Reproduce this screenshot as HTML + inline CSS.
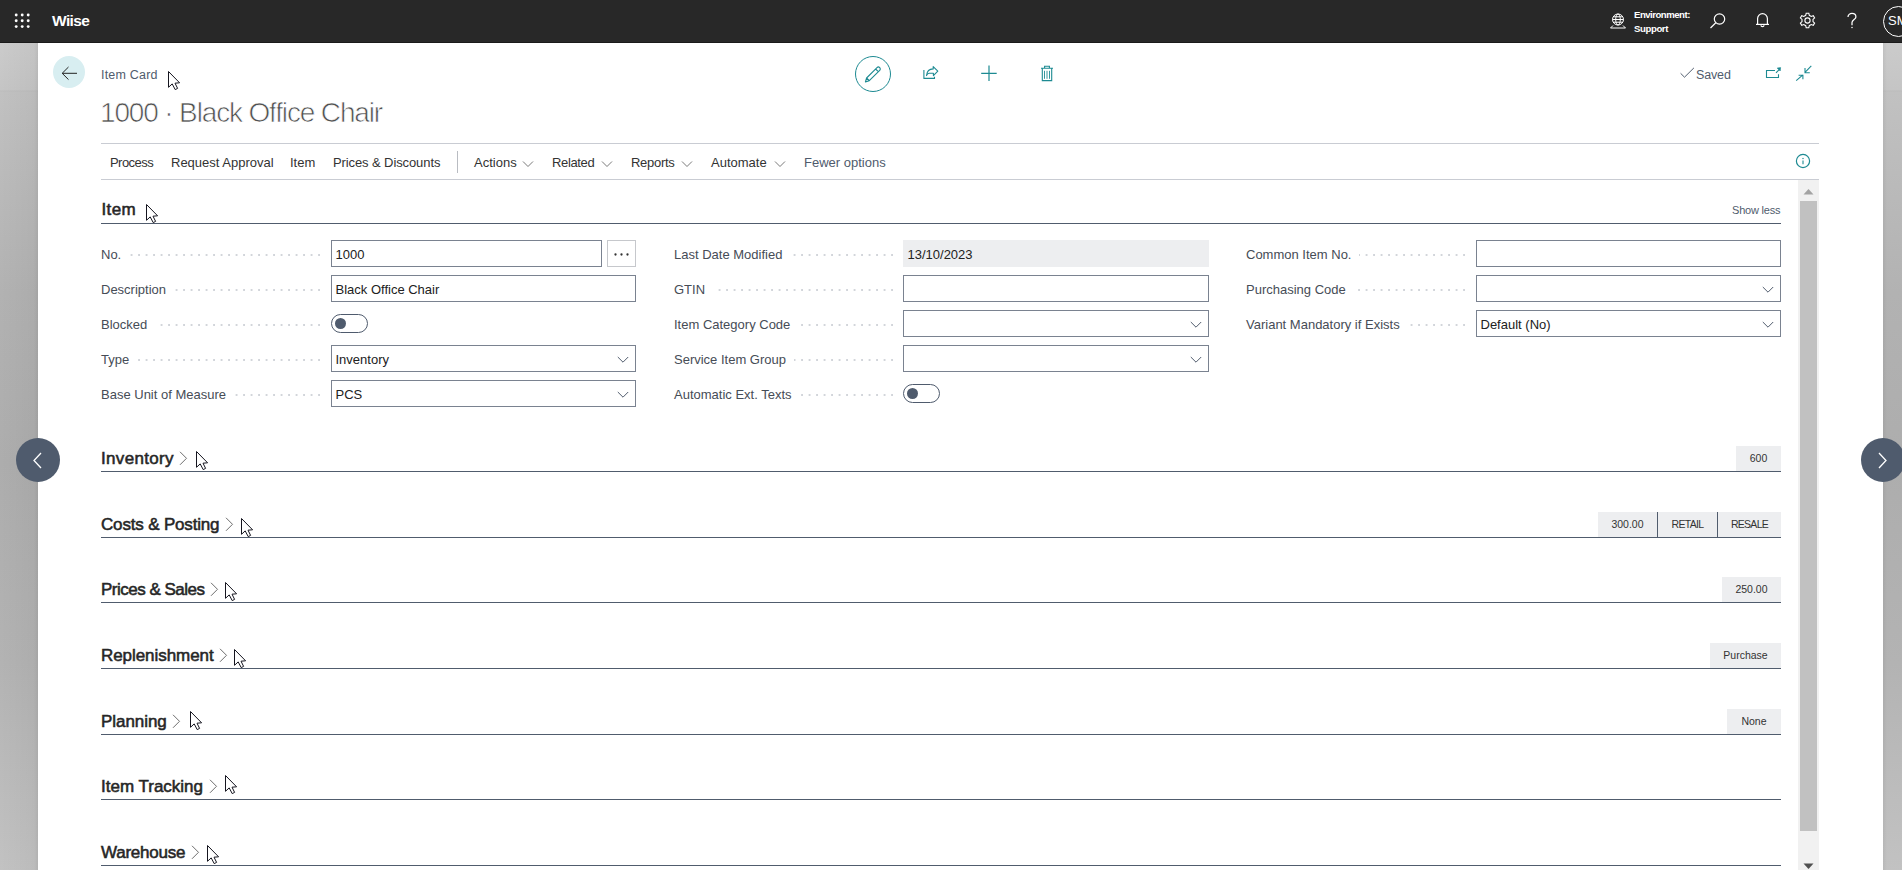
<!DOCTYPE html>
<html><head><meta charset="utf-8">
<style>
*{box-sizing:border-box;margin:0;padding:0}
html,body{width:1902px;height:870px;overflow:hidden;background:#fff;font-family:"Liberation Sans",sans-serif;color:#333}
.abs{position:absolute}
#top{position:absolute;left:0;top:0;width:1902px;height:43px;background:#282828;border-bottom:1px solid #1a1a1a;color:#fff;z-index:5}
#lstrip{position:absolute;left:0;top:43px;width:38px;height:827px;background:linear-gradient(90deg,rgba(0,0,0,0) 0,rgba(0,0,0,0.03) 34px,rgba(0,0,0,0.08) 38px),linear-gradient(180deg,#cbcbcb 0,#c5c5c5 47px,#bcbcbc 48px,#c1c1c1 49px,#b2b2b2 250px,#adadad 420px,#b3b3b3 620px,#c2c2c2 828px)}
#rstrip{position:absolute;left:1883px;top:43px;width:19px;height:827px;background:linear-gradient(90deg,rgba(0,0,0,0.05) 0,rgba(0,0,0,0) 4px),linear-gradient(180deg,#cbcbcb 0,#c5c5c5 47px,#bcbcbc 48px,#c1c1c1 49px,#b2b2b2 250px,#adadad 420px,#b3b3b3 620px,#c2c2c2 828px)}
.t13{font-size:13px;white-space:nowrap;position:absolute;line-height:16px}
.lbl{position:absolute;font-size:13px;line-height:16px;color:#464c56;white-space:nowrap;background:#fff;padding-right:8px;z-index:2}
.dots{position:absolute;height:2px;background-image:linear-gradient(90deg,transparent 5.5px,#d2d5da 5.5px);background-size:7.5px 2px;background-position:right 0 top 0;background-repeat:repeat-x}
.inp{position:absolute;height:27px;border:1px solid #7a8290;background:#fff;font-size:13px;line-height:27px;padding-left:3.5px;color:#212121;white-space:nowrap}
.inp.ro{background:#edeef0;border-color:#edeef0}
.chev{position:absolute;right:6px;top:9.5px;width:12px;height:8px}
.tog{position:absolute;width:37px;height:19px;border:1px solid #4f5b6d;border-radius:10px;background:#fff}
.tog:after{content:"";position:absolute;left:2.5px;top:3px;width:11px;height:11px;border-radius:50%;background:#4f5b6d}
.sech{position:absolute;left:101px;font-size:17px;font-weight:400;color:#262626;-webkit-text-stroke:0.55px #262626;white-space:nowrap;line-height:20px}
.secl{position:absolute;left:101px;width:1680px;height:2px;background:#505c6d;transform:scaleY(0.75)}
.badge{position:absolute;height:22px;background:#edeef0;font-size:10.5px;line-height:22px;color:#333;text-align:center;white-space:nowrap}
.schev{display:inline-block;margin-left:4px;vertical-align:-1px}
.cur{position:absolute;z-index:10}
.act{position:absolute;top:155px;font-size:13px;line-height:16px;color:#333;white-space:nowrap}
</style></head><body>

<!-- top bar -->
<div id="top">
  <svg class="abs" style="left:14px;top:12.5px" width="17" height="16" viewBox="0 0 17 16"><g fill="#fff"><circle cx="2.2" cy="2" r="1.45"/><circle cx="8.2" cy="2" r="1.45"/><circle cx="14.2" cy="2" r="1.45"/><circle cx="2.2" cy="7.8" r="1.45"/><circle cx="8.2" cy="7.8" r="1.45"/><circle cx="14.2" cy="7.8" r="1.45"/><circle cx="2.2" cy="13.6" r="1.45"/><circle cx="8.2" cy="13.6" r="1.45"/><circle cx="14.2" cy="13.6" r="1.45"/></g></svg>
  <div class="abs" style="left:52px;top:11px;font-size:15.5px;font-weight:700;line-height:20px;letter-spacing:-0.6px">Wiise</div>
  <!-- globe -->
  <svg class="abs" style="left:1609px;top:13px" width="18" height="16" viewBox="0 0 18 16" fill="none" stroke="#fff" stroke-width="1">
    <circle cx="9" cy="6.5" r="5.5"/><ellipse cx="9" cy="6.5" rx="2.3" ry="5.5"/><line x1="3.5" y1="6.5" x2="14.5" y2="6.5"/><line x1="4.2" y1="3.8" x2="13.8" y2="3.8"/><line x1="4.2" y1="9.2" x2="13.8" y2="9.2"/>
    <path d="M4 12.5 L1.5 15 H16.5 L14 12.5"/>
  </svg>
  <div class="abs" style="left:1634px;top:7.5px;font-size:9.6px;font-weight:700;line-height:14px;letter-spacing:-0.5px">Environment:</div>
  <div class="abs" style="left:1634px;top:22px;font-size:9.6px;font-weight:700;line-height:14px;letter-spacing:-0.4px">Support</div>
  <!-- search -->
  <svg class="abs" style="left:1709px;top:12px" width="18" height="18" viewBox="0 0 18 18" fill="none" stroke="#fff" stroke-width="1.2">
    <circle cx="10.5" cy="7" r="5.2"/><line x1="6.8" y1="10.8" x2="1.5" y2="16"/>
  </svg>
  <!-- bell -->
  <svg class="abs" style="left:1750px;top:10px" width="24" height="22" viewBox="1750 10 24 22" fill="none" stroke="#fff" stroke-width="1.2"><path d="M1757.6 24 V18.6 A4.9 4.9 0 0 1 1767.4 18.6 V24"/><path d="M1756 24.4 H1769"/><path d="M1761 25.2 A1.5 1.5 0 0 0 1764 25.2"/></svg>
  <!-- gear -->
  <svg class="abs" style="left:1799px;top:12px" width="17" height="17" viewBox="0 0 17 17" fill="none" stroke="#fff" stroke-width="1.1">
    <path d="M7.2 1.2 H9.8 L10.3 3.3 L12.2 4.4 L14.3 3.7 L15.6 6 L14 7.4 V9.6 L15.6 11 L14.3 13.3 L12.2 12.6 L10.3 13.7 L9.8 15.8 H7.2 L6.7 13.7 L4.8 12.6 L2.7 13.3 L1.4 11 L3 9.6 V7.4 L1.4 6 L2.7 3.7 L4.8 4.4 L6.7 3.3 Z"/>
    <circle cx="8.5" cy="8.5" r="2.6"/>
  </svg>
  <!-- help -->
  <svg class="abs" style="left:1840px;top:8px" width="24" height="26" viewBox="1840 8 24 26" fill="none" stroke="#fff" stroke-width="1.25"><path d="M1848 16.9 C1848 14.8 1849.8 13.4 1852 13.4 C1854.2 13.4 1855.9 14.9 1855.9 16.9 C1855.9 19.2 1852 19.9 1852 22.6 V25.2"/><circle cx="1852" cy="27.6" r="0.75" fill="#fff" stroke="none"/></svg>
  <!-- avatar -->
  <div class="abs" style="left:1883px;top:6px;width:31px;height:31px;border:1px solid #fff;border-radius:50%"></div>
  <div class="abs" style="left:1888px;top:13px;font-size:13px;line-height:16px;color:#fff">SM</div>
</div>

<div id="lstrip"></div>
<div id="rstrip"></div>

<!-- left/right nav circles -->
<div class="abs" style="left:15.5px;top:438px;width:44px;height:44px;border-radius:50%;background:#4f5b6d"></div>
<svg class="abs" style="left:32px;top:452px" width="12" height="17" viewBox="0 0 12 17" fill="none" stroke="#fff" stroke-width="1.3"><path d="M9 1 L2 8.5 L9 16"/></svg>
<div class="abs" style="left:1861px;top:438px;width:44px;height:44px;border-radius:50%;background:#4f5b6d"></div>
<svg class="abs" style="left:1876px;top:452px" width="12" height="17" viewBox="0 0 12 17" fill="none" stroke="#fff" stroke-width="1.3"><path d="M3 1 L10 8.5 L3 16"/></svg>

<!-- header -->
<div class="abs" style="left:53px;top:56px;width:32px;height:32px;border-radius:50%;background:#d8eef1"></div>
<svg class="abs" style="left:61px;top:65.5px" width="17" height="15" viewBox="0 0 17 15" fill="none" stroke="#222" stroke-width="1"><path d="M7.5 1 L1.2 7.3 L7.5 13.6 M1.2 7.3 H16"/></svg>
<div class="abs" style="left:101px;top:67px;font-size:12.5px;line-height:16px;color:#505c6d;white-space:nowrap;letter-spacing:0.2px">Item Card</div>
<div class="abs" style="left:100px;top:97px;font-size:28px;line-height:32px;color:#505050;white-space:nowrap;letter-spacing:-1.15px;-webkit-text-stroke:0.7px #fff">1000 · Black Office Chair</div>

<!-- center actions -->
<div class="abs" style="left:855px;top:56px;width:36px;height:36px;border-radius:50%;border:1.4px solid #1d8a92"></div>
<svg class="abs" style="left:863.3px;top:64.5px" width="20" height="20" viewBox="0 0 20 20" fill="none" stroke="#1d8a92" stroke-width="1.1" stroke-linejoin="round"><path d="M2.4 16.9 L3.6 13.0 L14.0 2.6 A1.55 1.55 0 0 1 16.7 5.3 L6.3 15.7 Z M12.6 4.0 L15.3 6.7 M3.6 13.0 L6.3 15.7"/></svg>
<svg class="abs" style="left:918px;top:60px" width="25" height="25" viewBox="0 0 25 25" fill="none" stroke="#1d8a92" stroke-width="1.1" stroke-linejoin="round"><path d="M5.9 10 V18.4 H16.5 V16.8"/><path d="M8.5 15.6 C8.9 11.6 11.2 8.9 15.2 8.9 V6.6 L19.8 11.2 L15.4 15.6 V13.2 H11.2 C10 13.2 9.1 14.2 8.5 15.6 Z"/></svg>
<svg class="abs" style="left:980px;top:65px" width="18" height="17" viewBox="0 0 18 17" fill="none" stroke="#1d8a92" stroke-width="1.2"><path d="M9 0.5 V16 M1.2 8.3 H16.7"/></svg>
<svg class="abs" style="left:1040px;top:65px" width="14" height="17" viewBox="0 0 14 17" fill="none" stroke="#1d8a92" stroke-width="1.1"><path d="M1 3.3 H13 M4.6 3.2 V1.2 H9.4 V3.2 M2.3 3.3 V15.6 H11.7 V3.3"/><path d="M4.5 5.8 V13.8 M7 5.8 V13.8 M9.5 5.8 V13.8" stroke-width="0.9"/></svg>

<!-- saved -->
<svg class="abs" style="left:1680px;top:67px" width="15" height="11" viewBox="0 0 15 11" fill="none" stroke="#505c6d" stroke-width="1"><path d="M0.6 6.3 L4.5 10.2 L13.9 0.9"/></svg>
<div class="abs" style="left:1696px;top:67px;font-size:12.5px;line-height:16px;color:#505c6d;white-space:nowrap;letter-spacing:-0.15px">Saved</div>
<svg class="abs" style="left:1765px;top:66px" width="17" height="14" viewBox="0 0 17 14" fill="none" stroke="#1d8a92" stroke-width="1.1"><path d="M10 4.5 H1.5 V11.5 H13.5 V8.2"/><path d="M11 6.8 L14.6 3.2"/><path d="M12.2 2.0 L15.6 1.6 L15.2 5.0 Z" fill="#1d8a92" stroke-width="0.6"/></svg>
<svg class="abs" style="left:1795px;top:65px" width="17" height="17" viewBox="0 0 17 17" fill="none" stroke="#1d8a92" stroke-width="1.1"><path d="M1.2 15.6 L7.9 9.8 M3.6 10.2 H7.9 V14.2"/><path d="M16.3 0.9 L10 7.3 M10 3.0 V7.7 H14.8"/></svg>

<!-- action bar -->
<div class="abs" style="left:101px;top:143px;width:1718px;height:1px;background:#c9ccd3"></div>
<div class="abs" style="left:101px;top:179px;width:1718px;height:1px;background:#c9ccd3"></div>
<div class="act" style="left:110px;letter-spacing:-0.55px">Process</div>
<div class="act" style="left:171px">Request Approval</div>
<div class="act" style="left:290px">Item</div>
<div class="act" style="left:333px;letter-spacing:-0.1px">Prices &amp; Discounts</div>
<div class="abs" style="left:457px;top:151px;width:1px;height:22px;background:#b9bcc2"></div>
<div class="act" style="left:474px">Actions</div>
<div class="act" style="left:552px;letter-spacing:-0.35px">Related</div>
<div class="act" style="left:631px;letter-spacing:-0.3px">Reports</div>
<div class="act" style="left:711px">Automate</div>
<div class="act" style="left:804px;color:#4f5b6d">Fewer options</div>
<svg class="abs" style="left:522px;top:160px" width="12" height="8" viewBox="0 0 12 8" fill="none" stroke="#6a6a6a" stroke-width="0.9"><path d="M1 1.5 L6 6.5 L11 1.5"/></svg>
<svg class="abs" style="left:601px;top:160px" width="12" height="8" viewBox="0 0 12 8" fill="none" stroke="#6a6a6a" stroke-width="0.9"><path d="M1 1.5 L6 6.5 L11 1.5"/></svg>
<svg class="abs" style="left:681px;top:160px" width="12" height="8" viewBox="0 0 12 8" fill="none" stroke="#6a6a6a" stroke-width="0.9"><path d="M1 1.5 L6 6.5 L11 1.5"/></svg>
<svg class="abs" style="left:774px;top:160px" width="12" height="8" viewBox="0 0 12 8" fill="none" stroke="#6a6a6a" stroke-width="0.9"><path d="M1 1.5 L6 6.5 L11 1.5"/></svg>
<svg class="abs" style="left:1795.3px;top:153px" width="16" height="16" viewBox="0 0 16 16" fill="none" stroke="#1d8a92" stroke-width="1.2"><circle cx="8" cy="8" r="6.6"/><path d="M8 7.4 V11.3" stroke-width="1.1"/><circle cx="8" cy="5.6" r="0.45" fill="#1d8a92" stroke-width="0.6"/></svg>

<!-- scrollbar -->
<div class="abs" style="left:1798px;top:180px;width:21px;height:690px;background:#f1f1f1"></div>
<div class="abs" style="left:1800px;top:201px;width:17px;height:630px;background:#c1c1c1"></div>
<svg class="abs" style="left:1803px;top:188px" width="11" height="7" viewBox="0 0 11 7"><path d="M0.5 6.5 L5.5 1 L10.5 6.5 Z" fill="#a3a3a3"/></svg>
<svg class="abs" style="left:1803px;top:862.5px" width="11" height="7" viewBox="0 0 11 7"><path d="M0.5 0.5 L5.5 6 L10.5 0.5 Z" fill="#505050"/></svg>

<!-- CONTENT -->
<!--CONTENT-->
<div class="sech" style="top:199.5px;left:101.5px;letter-spacing:0.4px">Item</div>
<div class="abs" style="left:101px;top:223px;width:1680px;height:1px;background:#505c6d"></div>
<div class="abs" style="left:1732px;top:203px;font-size:11px;line-height:14px;color:#505c6d;white-space:nowrap;letter-spacing:-0.2px">Show less</div>
<div class="lbl" style="left:101px;top:247px">No.</div>
<div class="dots" style="left:101px;top:254px;width:219px"></div>
<div class="inp" style="left:331px;top:240px;width:271px">1000</div>
<div class="inp" style="left:607px;top:240px;width:29px;border-color:#c6c8cc"></div>
<svg class="abs" style="left:614px;top:252.5px" width="15" height="3" viewBox="0 0 15 3"><g fill="#333"><circle cx="1.5" cy="1.5" r="1.15"/><circle cx="7.5" cy="1.5" r="1.15"/><circle cx="13.5" cy="1.5" r="1.15"/></g></svg>
<div class="lbl" style="left:101px;top:282px">Description</div>
<div class="dots" style="left:101px;top:289px;width:219px"></div>
<div class="inp" style="left:331px;top:275px;width:305px">Black Office Chair</div>
<div class="lbl" style="left:101px;top:317px">Blocked</div>
<div class="dots" style="left:101px;top:324px;width:219px"></div>
<div class="tog" style="left:331px;top:314px"></div>
<div class="lbl" style="left:101px;top:352px">Type</div>
<div class="dots" style="left:101px;top:359px;width:219px"></div>
<div class="inp" style="left:331px;top:345px;width:305px">Inventory<svg class="chev" width="12" height="8" viewBox="0 0 12 8" fill="none" stroke="#505c6d" stroke-width="1"><path d="M0.8 1 L6 6.2 L11.2 1"/></svg></div>
<div class="lbl" style="left:101px;top:387px">Base Unit of Measure</div>
<div class="dots" style="left:101px;top:394px;width:219px"></div>
<div class="inp" style="left:331px;top:380px;width:305px">PCS<svg class="chev" width="12" height="8" viewBox="0 0 12 8" fill="none" stroke="#505c6d" stroke-width="1"><path d="M0.8 1 L6 6.2 L11.2 1"/></svg></div>
<div class="lbl" style="left:674px;top:247px">Last Date Modified</div>
<div class="dots" style="left:674px;top:254px;width:219px"></div>
<div class="inp ro" style="left:903px;top:240px;width:306px">13/10/2023</div>
<div class="lbl" style="left:674px;top:282px">GTIN</div>
<div class="dots" style="left:674px;top:289px;width:219px"></div>
<div class="inp" style="left:903px;top:275px;width:306px"></div>
<div class="lbl" style="left:674px;top:317px">Item Category Code</div>
<div class="dots" style="left:674px;top:324px;width:219px"></div>
<div class="inp" style="left:903px;top:310px;width:306px"><svg class="chev" width="12" height="8" viewBox="0 0 12 8" fill="none" stroke="#505c6d" stroke-width="1"><path d="M0.8 1 L6 6.2 L11.2 1"/></svg></div>
<div class="lbl" style="left:674px;top:352px">Service Item Group</div>
<div class="dots" style="left:674px;top:359px;width:219px"></div>
<div class="inp" style="left:903px;top:345px;width:306px"><svg class="chev" width="12" height="8" viewBox="0 0 12 8" fill="none" stroke="#505c6d" stroke-width="1"><path d="M0.8 1 L6 6.2 L11.2 1"/></svg></div>
<div class="lbl" style="left:674px;top:387px">Automatic Ext. Texts</div>
<div class="dots" style="left:674px;top:394px;width:219px"></div>
<div class="tog" style="left:903px;top:384px"></div>
<div class="lbl" style="left:1246px;top:247px">Common Item No.</div>
<div class="dots" style="left:1246px;top:254px;width:219px"></div>
<div class="inp" style="left:1476px;top:240px;width:305px"></div>
<div class="lbl" style="left:1246px;top:282px">Purchasing Code</div>
<div class="dots" style="left:1246px;top:289px;width:219px"></div>
<div class="inp" style="left:1476px;top:275px;width:305px"><svg class="chev" width="12" height="8" viewBox="0 0 12 8" fill="none" stroke="#505c6d" stroke-width="1"><path d="M0.8 1 L6 6.2 L11.2 1"/></svg></div>
<div class="lbl" style="left:1246px;top:317px">Variant Mandatory if Exists</div>
<div class="dots" style="left:1246px;top:324px;width:219px"></div>
<div class="inp" style="left:1476px;top:310px;width:305px">Default (No)<svg class="chev" width="12" height="8" viewBox="0 0 12 8" fill="none" stroke="#505c6d" stroke-width="1"><path d="M0.8 1 L6 6.2 L11.2 1"/></svg></div>
<div class="sech" style="top:448.5px;letter-spacing:0.33px">Inventory</div>
<svg class="abs" style="left:178.5px;top:450.5px" width="9" height="15" viewBox="0 0 9 15" fill="none" stroke="#6e6e6e" stroke-width="1"><path d="M1 0.8 L7.5 7.3 L1 13.8"/></svg>
<div class="abs" style="left:101px;top:471px;width:1680px;height:1px;background:#505c6d"></div>
<div class="badge" style="left:1736px;top:446px;width:45px;height:25px;line-height:25px;letter-spacing:0">600</div>
<svg class="cur" style="left:196.3px;top:451.0px" width="13" height="20" viewBox="0 0 13 20"><path d="M0.5 0.5 V16.3 L4.2 12.9 L7.2 18.6 L9.6 17.4 L7.0 12.2 L11.6 11.8 Z" fill="#fff" stroke="#15151f" stroke-width="1" stroke-linejoin="round"/></svg>
<div class="sech" style="top:514.5px;letter-spacing:-0.17px">Costs &amp; Posting</div>
<svg class="abs" style="left:224.5px;top:516.5px" width="9" height="15" viewBox="0 0 9 15" fill="none" stroke="#6e6e6e" stroke-width="1"><path d="M1 0.8 L7.5 7.3 L1 13.8"/></svg>
<div class="abs" style="left:101px;top:537px;width:1680px;height:1px;background:#505c6d"></div>
<div class="badge" style="left:1598px;top:512px;width:59px;height:25px;line-height:25px;letter-spacing:0">300.00</div>
<div class="badge" style="left:1658px;top:512px;width:59px;height:25px;line-height:25px;letter-spacing:-0.7px">RETAIL</div>
<div class="abs" style="left:1657px;top:512px;width:1px;height:25px;background:#505c6d"></div>
<div class="badge" style="left:1718px;top:512px;width:63px;height:25px;line-height:25px;letter-spacing:-0.7px">RESALE</div>
<div class="abs" style="left:1717px;top:512px;width:1px;height:25px;background:#505c6d"></div>
<svg class="cur" style="left:241.4px;top:518.1px" width="13" height="20" viewBox="0 0 13 20"><path d="M0.5 0.5 V16.3 L4.2 12.9 L7.2 18.6 L9.6 17.4 L7.0 12.2 L11.6 11.8 Z" fill="#fff" stroke="#15151f" stroke-width="1" stroke-linejoin="round"/></svg>
<div class="sech" style="top:579.5px;letter-spacing:-0.5px">Prices &amp; Sales</div>
<svg class="abs" style="left:209.5px;top:581.5px" width="9" height="15" viewBox="0 0 9 15" fill="none" stroke="#6e6e6e" stroke-width="1"><path d="M1 0.8 L7.5 7.3 L1 13.8"/></svg>
<div class="abs" style="left:101px;top:602px;width:1680px;height:1px;background:#505c6d"></div>
<div class="badge" style="left:1722px;top:577px;width:59px;height:25px;line-height:25px;letter-spacing:0">250.00</div>
<svg class="cur" style="left:224.5px;top:582.2px" width="13" height="20" viewBox="0 0 13 20"><path d="M0.5 0.5 V16.3 L4.2 12.9 L7.2 18.6 L9.6 17.4 L7.0 12.2 L11.6 11.8 Z" fill="#fff" stroke="#15151f" stroke-width="1" stroke-linejoin="round"/></svg>
<div class="sech" style="top:645.5px;letter-spacing:-0.06px">Replenishment</div>
<svg class="abs" style="left:218.5px;top:647.5px" width="9" height="15" viewBox="0 0 9 15" fill="none" stroke="#6e6e6e" stroke-width="1"><path d="M1 0.8 L7.5 7.3 L1 13.8"/></svg>
<div class="abs" style="left:101px;top:668px;width:1680px;height:1px;background:#505c6d"></div>
<div class="badge" style="left:1710px;top:643px;width:71px;height:25px;line-height:25px;letter-spacing:0">Purchase</div>
<svg class="cur" style="left:234.3px;top:649.3px" width="13" height="20" viewBox="0 0 13 20"><path d="M0.5 0.5 V16.3 L4.2 12.9 L7.2 18.6 L9.6 17.4 L7.0 12.2 L11.6 11.8 Z" fill="#fff" stroke="#15151f" stroke-width="1" stroke-linejoin="round"/></svg>
<div class="sech" style="top:711.5px;letter-spacing:-0.06px">Planning</div>
<svg class="abs" style="left:171.9px;top:713.5px" width="9" height="15" viewBox="0 0 9 15" fill="none" stroke="#6e6e6e" stroke-width="1"><path d="M1 0.8 L7.5 7.3 L1 13.8"/></svg>
<div class="abs" style="left:101px;top:734px;width:1680px;height:1px;background:#505c6d"></div>
<div class="badge" style="left:1727px;top:709px;width:54px;height:25px;line-height:25px;letter-spacing:0">None</div>
<svg class="cur" style="left:190.3px;top:711.3px" width="13" height="20" viewBox="0 0 13 20"><path d="M0.5 0.5 V16.3 L4.2 12.9 L7.2 18.6 L9.6 17.4 L7.0 12.2 L11.6 11.8 Z" fill="#fff" stroke="#15151f" stroke-width="1" stroke-linejoin="round"/></svg>
<div class="sech" style="top:776.5px;letter-spacing:0px">Item Tracking</div>
<svg class="abs" style="left:208.5px;top:778.5px" width="9" height="15" viewBox="0 0 9 15" fill="none" stroke="#6e6e6e" stroke-width="1"><path d="M1 0.8 L7.5 7.3 L1 13.8"/></svg>
<div class="abs" style="left:101px;top:799px;width:1680px;height:1px;background:#505c6d"></div>
<svg class="cur" style="left:225.3px;top:775.3px" width="13" height="20" viewBox="0 0 13 20"><path d="M0.5 0.5 V16.3 L4.2 12.9 L7.2 18.6 L9.6 17.4 L7.0 12.2 L11.6 11.8 Z" fill="#fff" stroke="#15151f" stroke-width="1" stroke-linejoin="round"/></svg>
<div class="sech" style="top:842.5px;letter-spacing:-0.23px">Warehouse</div>
<svg class="abs" style="left:190.5px;top:844.5px" width="9" height="15" viewBox="0 0 9 15" fill="none" stroke="#6e6e6e" stroke-width="1"><path d="M1 0.8 L7.5 7.3 L1 13.8"/></svg>
<div class="abs" style="left:101px;top:865px;width:1680px;height:1px;background:#505c6d"></div>
<svg class="cur" style="left:207.4px;top:845.4px" width="13" height="20" viewBox="0 0 13 20"><path d="M0.5 0.5 V16.3 L4.2 12.9 L7.2 18.6 L9.6 17.4 L7.0 12.2 L11.6 11.8 Z" fill="#fff" stroke="#15151f" stroke-width="1" stroke-linejoin="round"/></svg>
<svg class="cur" style="left:168.3px;top:71.1px" width="13" height="20" viewBox="0 0 13 20"><path d="M0.5 0.5 V16.3 L4.2 12.9 L7.2 18.6 L9.6 17.4 L7.0 12.2 L11.6 11.8 Z" fill="#fff" stroke="#15151f" stroke-width="1" stroke-linejoin="round"/></svg>
<svg class="cur" style="left:146.3px;top:204.2px" width="13" height="20" viewBox="0 0 13 20"><path d="M0.5 0.5 V16.3 L4.2 12.9 L7.2 18.6 L9.6 17.4 L7.0 12.2 L11.6 11.8 Z" fill="#fff" stroke="#15151f" stroke-width="1" stroke-linejoin="round"/></svg>
<!--/CONTENT-->
</body></html>
